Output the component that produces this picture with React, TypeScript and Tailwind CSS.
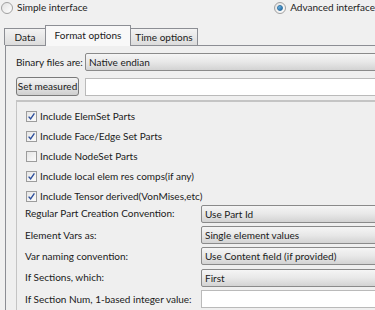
import React from "react";

const font = { fontFamily: "'Lato', 'Liberation Sans', sans-serif" };

function Radio({ checked }: { checked?: boolean }) {
  return (
    <span className="relative inline-flex w-[12px] h-[12px] rounded-full border border-[#a0a0a0] bg-gradient-to-br from-[#e2e2e2] to-[#ffffff] items-center justify-center shrink-0">
      {checked && (
        <span className="w-[6px] h-[6px] rounded-full bg-gradient-to-br from-[#7cc8f2] to-[#1a62a0] border border-[#2f6f9f]" />
      )}
    </span>
  );
}

function Check({ checked }: { checked?: boolean }) {
  return (
    <span className="inline-flex w-[11px] h-[11px] border border-[#9c9c9c] bg-gradient-to-br from-[#e6e6e6] to-[#fbfbfb] items-center justify-center shrink-0">
      {checked && (
        <svg width="9" height="9" viewBox="0 0 9 9">
          <path d="M1.6 4.6 L3.6 6.8 L7.4 1.4" fill="none" stroke="#2d4f9c" strokeWidth="1.4" />
        </svg>
      )}
    </span>
  );
}

function Combo({ value }: { value: string }) {
  return (
    <div className="h-[18px] w-full rounded-[2px] border border-[#8a8a8a] bg-gradient-to-b from-[#f5f5f5] via-[#e8e8e8] to-[#d3d3d3] text-[10px] text-[#1a1a1a] leading-[16px] pl-[3px] whitespace-nowrap">
      {value}
    </div>
  );
}

function Input() {
  return <div className="h-[18px] w-full border border-[#bababa] bg-white" />;
}

function CheckRow({ label, checked }: { label: string; checked?: boolean }) {
  return (
    <div className="flex items-center h-[20px] gap-[3px] pl-[9px]">
      <Check checked={checked} />
      <span className="text-[10px] text-[#1a1a1a] whitespace-nowrap">{label}</span>
    </div>
  );
}

function FieldRow({ label, value, input }: { label: string; value?: string; input?: boolean }) {
  return (
    <div className="flex items-center h-[21.4px]">
      <span className="w-[184px] pl-[8px] text-[10px] text-[#1a1a1a] shrink-0 whitespace-nowrap">{label}</span>
      <div className="flex-1">{input ? <Input /> : <Combo value={value || ""} />}</div>
    </div>
  );
}

export default function App() {
  return (
    <div className="w-[375px] h-[310px] overflow-hidden bg-[#f0f0f0] relative" style={font}>
      <div className="flex items-center h-[14px] pt-[1px]">
        <div className="flex items-center gap-[4px] pl-[1px] w-[278px] text-[10px] text-[#222] whitespace-nowrap">
          <Radio />
          <span>Simple interface</span>
        </div>
        <div className="flex items-center gap-[4px] text-[10px] text-[#222] whitespace-nowrap">
          <Radio checked />
          <span>Advanced interface</span>
        </div>
      </div>
      <div className="flex items-end h-[31px] pl-[4px] text-[10px] text-[#1a1a1a] whitespace-nowrap">
        <div className="h-[17px] w-[42px] border border-b-0 border-[#8c8e94] bg-gradient-to-b from-[#f3f3f3] to-[#dcdcdc] flex items-center justify-center -mr-[1px]">
          Data
        </div>
        <div className="h-[21px] w-[86px] border border-b-0 border-[#8c8e94] bg-[#f8f8f8] flex items-start pt-[2px] justify-center relative z-10 -mb-[1px]">
          Format options
        </div>
        <div className="h-[17px] w-[68px] border border-b-0 border-[#8c8e94] bg-gradient-to-b from-[#f3f3f3] to-[#dcdcdc] flex items-center justify-center -ml-[1px]">
          Time options
        </div>
      </div>
      <div className="ml-[5px] w-[420px] h-[300px] border border-[#8c8e94] bg-[#efefef] pl-[10px] pr-[2px]">
        <div className="flex items-center mt-[7px] h-[18px]">
          <span className="w-[69px] text-[10px] text-[#1a1a1a] shrink-0 whitespace-nowrap">Binary files are:</span>
          <div className="flex-1">
            <Combo value="Native endian" />
          </div>
        </div>
        <div className="flex items-center mt-[6px] h-[19px]">
          <div className="w-[63px] h-[19px] rounded-[3px] border border-[#7a7a7a] bg-gradient-to-b from-[#f3f3f3] via-[#e4e4e4] to-[#cfcfcf] text-[10px] text-[#1a1a1a] flex items-center justify-center shrink-0 whitespace-nowrap">
            Set measured
          </div>
          <div className="w-[6px]" />
          <div className="flex-1">
            <Input />
          </div>
        </div>
        <div className="mt-[4px] border-t-2 border-l border-[#c4c4c4] pt-[4px] h-[230px]">
          <CheckRow label="Include ElemSet Parts" checked />
          <CheckRow label="Include Face/Edge Set Parts" checked />
          <CheckRow label="Include NodeSet Parts" />
          <CheckRow label="Include local elem res comps(if any)" checked />
          <CheckRow label="Include Tensor derived(VonMises,etc)" checked />
          <div className="-mt-[3px]">
            <FieldRow label="Regular Part Creation Convention:" value="Use Part Id" />
            <FieldRow label="Element Vars as:" value="Single element values" />
            <FieldRow label="Var naming convention:" value="Use Content field (if provided)" />
            <FieldRow label="If Sections, which:" value="First" />
            <FieldRow label="If Section Num, 1-based integer value:" input />
          </div>
        </div>
      </div>
    </div>
  );
}
